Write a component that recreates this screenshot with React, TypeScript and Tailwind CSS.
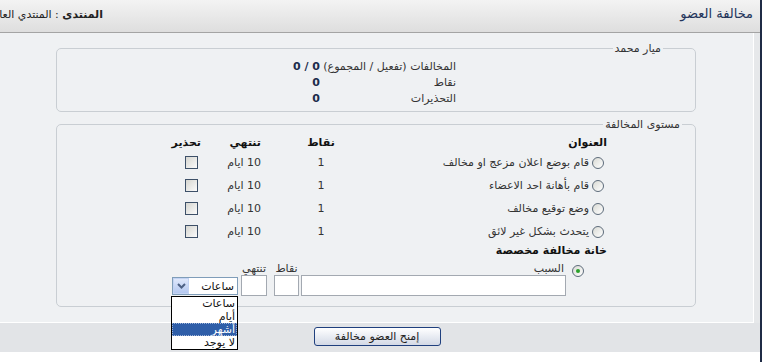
import React from "react";

function Radio({ checked = false }: { checked?: boolean }) {
  return (
    <span className="w-[12px] h-[12px] shrink-0 rounded-full border border-[#5d6b7a] bg-linear-to-br from-[#d9dad4] to-white flex items-center justify-center">
      {checked && <span className="w-[4px] h-[4px] rounded-full bg-[#2aa12a]" />}
    </span>
  );
}

function Check() {
  return <span className="block w-[13px] h-[13px] border border-[#3d5068] bg-linear-to-br from-[#d6d6d0] to-[#fbfbfb]" />;
}

const stats = [
  { label: "المخالفات (تفعيل / المجموع)", value: "0 / 0" },
  { label: "نقاط", value: "0" },
  { label: "التحذيرات", value: "0" },
];

const reasons = [
  "قام بوضع اعلان مزعج او مخالف",
  "قام بأهانة احد الاعضاء",
  "وضع توقيع مخالف",
  "يتحدث بشكل غير لائق",
];

const units = ["ساعات", "أيام", "أشهر", "لا يوجد"];

export default function App() {
  return (
    <div className="w-[766px] h-[362px] flex bg-white overflow-hidden font-['DejaVu_Sans',sans-serif] text-[11px] leading-[13px] text-[#333]">
      <div dir="rtl" className="w-[760px] shrink-0 flex flex-col">
        {/* Header */}
        <div className="h-[33px] shrink-0 border-b border-[#a4a4a4] bg-linear-to-b from-[#f3f3f3] to-[#dedede] flex items-start justify-between pt-[6px]">
          <h1 className="mr-[7px] text-[13px] leading-[16px] text-[#22345a]">مخالفة العضو</h1>
          <div className="w-[103px] overflow-hidden whitespace-nowrap pt-[2px] text-[#222]">
            <b>المنتدى</b> : المنتدي العام
          </div>
        </div>

        {/* Body */}
        <div className="bg-[#e6e8ea] pr-[6px]">
          <div className="bg-[#eff1f3] border-r border-b border-white pt-[9px] pb-[15px]">
            <fieldset className="w-[640px] mr-[57px] border border-[#c9ced3] rounded-[5px] pt-[3px] pb-[5px]">
              <legend className="mr-[32px] px-[2px]">ميار محمد</legend>
              <div className="mr-[239px] flex flex-col">
                {stats.map((s) => (
                  <div key={s.label} className="h-[16px] flex items-center">
                    <span className="w-[136px] whitespace-nowrap">{s.label}</span>
                    <span className="font-bold text-[#1c2c4c]">{s.value}</span>
                  </div>
                ))}
              </div>
            </fieldset>

            <fieldset className="w-[640px] mr-[57px] mt-[6px] border border-[#c9ced3] rounded-[5px] pt-[2px] pb-[10px]">
              <legend className="mr-[13px] px-[2px]">مستوى المخالفة</legend>
              <div className="mr-[88px]">
                <div className="h-[18px] flex items-center font-bold text-[#111]">
                  <span className="w-[268px]">العنوان</span>
                  <span className="w-[78px] pl-[42px] text-center">نقاط</span>
                  <span className="w-[60px]">تنتهي</span>
                  <span className="w-[30px]">تحذير</span>
                </div>
                {reasons.map((r) => (
                  <div key={r} className="h-[23px] flex items-center">
                    <span className="w-[268px] flex items-center gap-[3px] pr-[3px]">
                      <Radio />
                      <span>{r}</span>
                    </span>
                    <span className="w-[78px] pl-[42px] text-center">1</span>
                    <span className="w-[60px]">10 ايام</span>
                    <span className="w-[30px] pr-[3px]">
                      <Check />
                    </span>
                  </div>
                ))}
                <div className="h-[14px] flex items-center font-bold text-[#111]">خانة مخالفة مخصصة</div>
              </div>

              <div className="mr-[111px] mt-[5px] flex items-start">
                <span className="mt-[3px]">
                  <Radio checked />
                </span>
                <div className="mr-[6px] flex flex-col">
                  <span className="h-[13px] pr-[2px]">السبب</span>
                  <span className="block w-[265px] h-[21px] bg-white border border-[#a3a9b1]" />
                </div>
                <div className="mr-[2px] flex flex-col items-center">
                  <span className="h-[13px]">نقاط</span>
                  <span className="block w-[25px] h-[21px] bg-white border border-[#a3a9b1]" />
                </div>
                <div className="mr-[7px] flex flex-col items-center">
                  <span className="h-[13px]">تنتهي</span>
                  <span className="block w-[26px] h-[21px] bg-white border border-[#a3a9b1]" />
                </div>
                <div className="relative mr-[3px] mt-[15px] w-[66px] h-[18px] bg-white border border-[#7f9db9] flex items-center">
                  <span className="flex-1 pr-[3px] text-[#111]">ساعات</span>
                  <span className="w-[16px] h-[16px] bg-linear-to-b from-[#dfe8fb] to-[#b4c8f0] border border-[#c3d3f3] flex items-center justify-center">
                    <svg width="9" height="6" viewBox="0 0 9 6">
                      <path d="M1 1l3.5 3.5L8 1" fill="none" stroke="#4d6185" strokeWidth="2" />
                    </svg>
                  </span>
                  <ul className="absolute z-10 top-[18px] -right-[1px] w-[67px] bg-white border border-black text-[#111]">
                    {units.map((u) => (
                      <li
                        key={u}
                        className={
                          u === "أشهر"
                            ? "h-[13px] pr-[2px] leading-[13px] bg-[#2f5ea8] text-white outline-1 outline-dotted outline-[#9fb4d8] -outline-offset-1"
                            : "h-[13px] pr-[2px] leading-[13px]"
                        }
                      >
                        {u}
                      </li>
                    ))}
                  </ul>
                </div>
              </div>
            </fieldset>
          </div>
        </div>

        {/* Footer */}
        <div className="h-[29px] shrink-0 bg-[#e2e4e7] pr-[6px] flex justify-center pt-[4px]">
          <button className="w-[127px] h-[19px] rounded-[3px] border border-[#20407e] bg-linear-to-b from-white to-[#d3d9e6] text-[11px] leading-[13px] text-[#222] font-['DejaVu_Sans',sans-serif]">
            إمنح العضو مخالفة
          </button>
        </div>
      </div>
      <div className="w-[2px] shrink-0 bg-[#1f2b45]" />
      <div className="flex-1 bg-white" />
    </div>
  );
}
